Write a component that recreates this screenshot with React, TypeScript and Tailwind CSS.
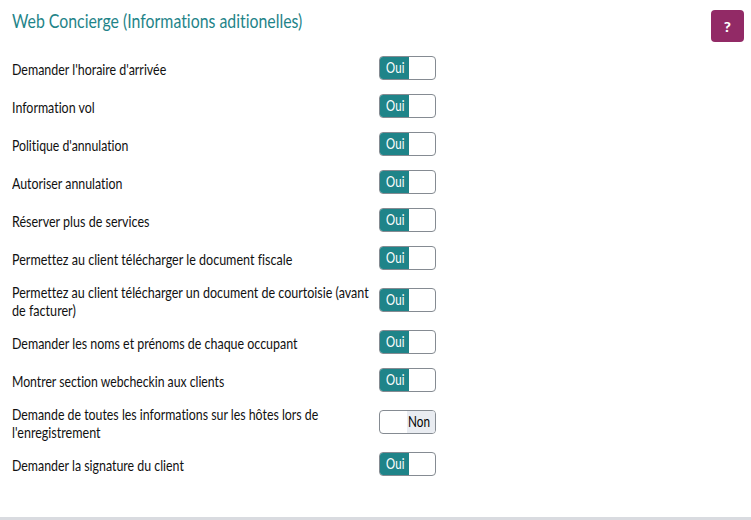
import { clsx } from "clsx";

type Line = {
  text: string;
  // horizontal condensing of the label face
  fit: string;
};

type Option = {
  lines: Line[];
  enabled: boolean;
};

const options: Option[] = [
  { lines: [{ text: "Demander l'horaire d'arrivée", fit: "scale-x-[0.829]" }], enabled: true },
  { lines: [{ text: "Information vol", fit: "scale-x-[0.827]" }], enabled: true },
  { lines: [{ text: "Politique d'annulation", fit: "scale-x-[0.817]" }], enabled: true },
  { lines: [{ text: "Autoriser annulation", fit: "scale-x-[0.824]" }], enabled: true },
  { lines: [{ text: "Réserver plus de services", fit: "scale-x-[0.835]" }], enabled: true },
  {
    lines: [{ text: "Permettez au client télécharger le document fiscale", fit: "scale-x-[0.836]" }],
    enabled: true,
  },
  {
    lines: [
      { text: "Permettez au client télécharger un document de courtoisie (avant", fit: "scale-x-[0.834]" },
      { text: "de facturer)", fit: "scale-x-[0.84]" },
    ],
    enabled: true,
  },
  {
    lines: [{ text: "Demander les noms et prénoms de chaque occupant", fit: "scale-x-[0.829]" }],
    enabled: true,
  },
  { lines: [{ text: "Montrer section webcheckin aux clients", fit: "scale-x-[0.815]" }], enabled: true },
  {
    lines: [
      { text: "Demande de toutes les informations sur les hôtes lors de", fit: "scale-x-[0.823]" },
      { text: "l'enregistrement", fit: "scale-x-[0.836]" },
    ],
    enabled: false,
  },
  { lines: [{ text: "Demander la signature du client", fit: "scale-x-[0.825]" }], enabled: true },
];

function Toggle({ enabled }: { enabled: boolean }) {
  return (
    <button
      type="button"
      role="switch"
      aria-checked={enabled}
      className={clsx(
        "flex h-6 w-[57px] shrink-0 overflow-hidden rounded-[4px] border border-[#858b92] bg-white text-[15px] leading-5",
        enabled ? "justify-start" : "justify-end"
      )}
    >
      {enabled ? (
        <span className="h-full w-[29px] bg-[#1f8489] pl-[2px] text-center text-white">
          <span className="inline-block scale-x-[0.76] tracking-[0.3px]">Oui</span>
        </span>
      ) : (
        <span className="flex h-full w-[28px] justify-center bg-[#e9ecf1] pr-[3px] text-black">
          <span className="inline-block scale-x-[0.78]">Non</span>
        </span>
      )}
    </button>
  );
}

export default function App() {
  return (
    <main className="flex h-[520px] w-[751px] flex-col overflow-hidden border-b-[3px] border-[#d9dbe0] bg-white font-['Lato',sans-serif] [font-variant-ligatures:none]">
      <header className="flex h-[49px] items-start justify-between pl-3 pr-[7px]">
        <h1 className="origin-left scale-x-[0.793] whitespace-nowrap pt-2 text-[20px] leading-6 text-[#1f8489]">
          Web Concierge (Informations aditionelles)
        </h1>
        <button
          type="button"
          aria-label="Aide"
          className="mt-[10px] flex h-8 w-[33px] items-center justify-center rounded-[4px] bg-[#922a66] text-[14px] font-black text-white"
        >
          <span className="inline-block scale-x-110">?</span>
        </button>
      </header>

      {/* One setting per row, label on the left */}
      <ul>
        {options.map((option) => (
          <li
            key={option.lines[0].text}
            className={clsx("flex items-center pl-3", option.lines.length > 1 ? "h-[46px]" : "h-[38px]")}
          >
            <div className="w-[367px] shrink-0 pt-0.5 text-[15px] leading-[18px] text-[#111]">
              {option.lines.map((line) => (
                <p key={line.text} className={clsx("origin-left whitespace-nowrap", line.fit)}>
                  {line.text}
                </p>
              ))}
            </div>
            <Toggle enabled={option.enabled} />
          </li>
        ))}
      </ul>
    </main>
  );
}
